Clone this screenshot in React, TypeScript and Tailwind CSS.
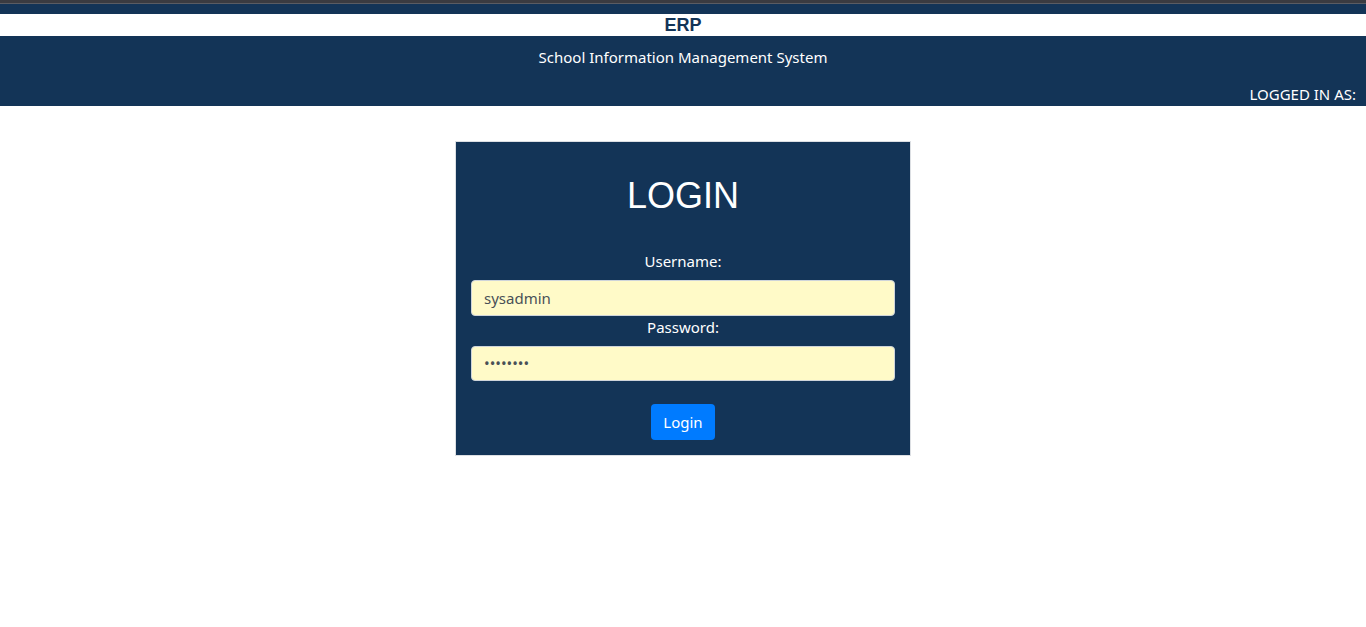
import React from "react";

export default function App() {
  return (
    <div className="min-h-[627px] bg-white" style={{ fontFamily: '"Noto Sans", "Open Sans", sans-serif' }}>
      <div className="h-[3px] bg-[#3a3b41]" />
      <div className="h-[1px] bg-[#5a5c63]" />
      <div className="h-[10px] bg-[#133457]" />
      <div className="h-[22px] flex items-center justify-center">
        <span className="text-[18px] font-bold text-[#133457] leading-none" style={{ fontFamily: '"Liberation Sans", Arial, sans-serif' }}>ERP</span>
      </div>
      <div className="h-[70px] bg-[#133457] text-white text-[15px] flex flex-col">
        <div className="pt-[10px] text-center leading-[22px]">School Information Management System</div>
        <div className="mt-auto pb-[1px] text-right pr-[10px] leading-[22px]">LOGGED IN AS:</div>
      </div>
      <div className="flex justify-center pt-[35px]">
        <div className="w-[456px] border border-[#dcdfe3] bg-[#133457] px-[15px] pb-[15px] flex flex-col items-center text-white">
          <h1 className="mt-[33px] text-[36px] leading-[42px]" style={{ fontFamily: '"Liberation Sans", Arial, sans-serif' }}>LOGIN</h1>
          <label className="mt-[33px] text-[15px] leading-[22px]">Username:</label>
          <div className="mt-[8px] w-full h-[36px] rounded-[4px] border border-[#ced4da] bg-[#fffac8] flex items-center px-[12px] text-[15px] text-[#495057]">sysadmin</div>
          <label className="mt-0 text-[15px] leading-[22px]">Password:</label>
          <div className="mt-[8px] w-full h-[35px] rounded-[4px] border border-[#ced4da] bg-[#fffac8] flex items-center px-[12px] text-[15px] text-[#495057]">••••••••</div>
          <button className="mt-[23px] h-[36px] px-[12px] rounded-[4px] bg-[#007bff] text-white text-[15px]">Login</button>
        </div>
      </div>
    </div>
  );
}
